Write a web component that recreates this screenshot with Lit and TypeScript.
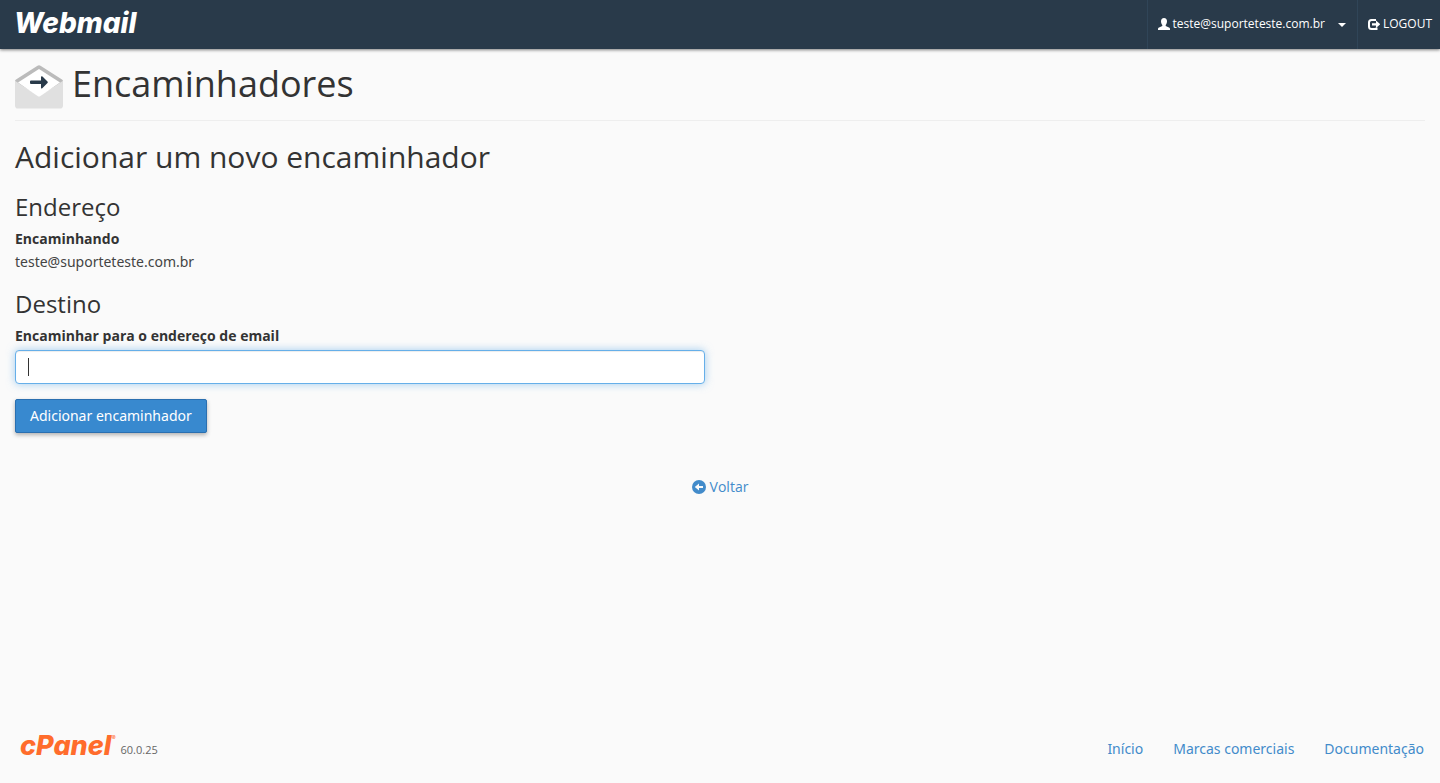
import { LitElement, html, css, svg } from "lit";
import { customElement, property, state } from "lit/decorators.js";

const userIcon = svg`<svg class="glyph" viewBox="0 0 12 12" width="12" height="12" aria-hidden="true"><path fill="currentColor" d="M6 0C8 0 9 1.300 9 3.200C9 4.700 8.500 6 7.700 6.900V8L11 9.400Q12 9.800 12 11V12H0V11Q0 9.800 1 9.400L4.300 8V6.900C3.500 6 3 4.700 3 3.200C3 1.300 4 0 6 0Z"/></svg>`;
const logoutIcon = svg`<svg class="glyph" viewBox="0 0 12 12" width="12" height="12" aria-hidden="true"><path fill="none" stroke="currentColor" stroke-width="2" d="M8 2H3.500Q1 2 1 4.500V8.500Q1 11 3.500 11H8.500V9.500"/><path fill="currentColor" d="M4 5.300H8V2.500L12.300 6.300L8 10V7.500H4Z"/></svg>`;
const backIcon = svg`<svg class="glyph back" viewBox="0 0 14 14" width="14" height="14" aria-hidden="true"><circle cx="7" cy="7" r="7" fill="currentColor"/><path fill="#fafafa" d="M2.800 7L7 3.500V6H11V8H7V10.500Z"/></svg>`;
const envelopeIcon = svg`<svg viewBox="0 0 48 48" width="48" height="48" aria-hidden="true"><path fill="#bbb" d="M0 17.500V16Q0 15 1 14.400L22.500 .7Q24 -.2 25.500 .7L47 14.400Q48 15 48 16V17.500L24 30Z"/><path fill="#fff" d="M3 17.500L24 4L45 17.500L25.500 31Q24 32 22.500 31Z"/><path fill="#e0e0e0" d="M0 15.800L22.500 31Q24 32 25.500 31L48 15.800V40.500Q48 43.600 45 43.600H3Q0 43.600 0 40.500Z"/><path fill="#293a4a" d="M16 15.500H26V12.500Q26 10.500 27.500 11.500L32.500 16.500Q33.200 17.300 32.500 18L27.500 23Q26 24.300 26 22.500V19H16Q15 19 15 18V16.500Q15 15.500 16 15.500Z"/></svg>`;

@customElement("webmail-header")
class WebmailHeader extends LitElement {
  @property() account = "";

  static styles = css`
    :host { display: block; }
    .bar {
      display: flex;
      justify-content: space-between;
      height: 49px;
      background: #293a4a;
      box-shadow: 0 1px 3px rgba(0, 0, 0, 0.5);
    }
    .brand {
      padding-left: 14px;
      font: italic 800 28px/46px Inter, sans-serif;
      color: #fff;
      text-decoration: none;
    }
    .tools { display: flex; }
    .item {
      display: flex;
      align-items: center;
      gap: 3px;
      box-sizing: border-box;
      height: 49px;
      margin: 0;
      padding: 0 8px 2px 10px;
      border: 0;
      border-left: 1px solid #304558;
      background: none;
      color: #fff;
      font: 12px/20px "Open Sans", sans-serif;
      text-decoration: none;
      cursor: pointer;
    }
    .account { padding-right: 11px; }
    .glyph { flex: none; }
    .caret {
      margin: 3px 0 0 10px;
      border: 4px solid transparent;
      border-top-color: #fff;
      border-bottom: 0;
    }
  `;

  render() {
    return html`
      <header class="bar">
        <a class="brand" href="#">Webmail</a>
        <nav class="tools">
          <button class="item account" type="button" aria-haspopup="true">
            ${userIcon}<span>${this.account}</span><span class="caret"></span>
          </button>
          <a class="item" href="#logout">${logoutIcon}<span>LOGOUT</span></a>
        </nav>
      </header>
    `;
  }
}

@customElement("webmail-footer")
class WebmailFooter extends LitElement {
  static styles = css`
    :host { display: block; }
    .footer {
      display: flex;
      justify-content: space-between;
      align-items: center;
      padding: 0 16px 15px 20px;
    }
    .product { display: flex; align-items: flex-end; gap: 5px; padding-bottom: 6px; }
    .logo {
      color: #ff6c2c;
      font: italic 800 27px/32px Inter, sans-serif;
      text-decoration: none;
    }
    .mark { font-size: 6px; font-weight: 400; vertical-align: 15px; line-height: 1; }
    .version { color: #666; font-size: 11px; line-height: 24px; }
    .links { display: flex; gap: 30px; font-family: "Noto Sans", sans-serif; line-height: 20px; }
    .link { color: #428bca; text-decoration: none; }
  `;

  private links = ["Início", "Marcas comerciais", "Documentação"];

  render() {
    return html`
      <footer class="footer">
        <div class="product">
          <a class="logo" href="#cpanel">cPanel<span class="mark">®</span></a>
          <span class="version">60.0.25</span>
        </div>
        <nav class="links">
          ${this.links.map((text) => html`<a class="link" href="#">${text}</a>`)}
        </nav>
      </footer>
    `;
  }
}

@customElement("app-root")
class AppRoot extends LitElement {
  @state() private account = "teste@suporteteste.com.br";

  static styles = css`
    :host {
      display: flex;
      flex-direction: column;
      min-height: 100vh;
      background: #fafafa;
      color: #333;
      font: 14px/20px "Open Sans", sans-serif;
    }
    .content { flex: 1; padding: 16px 15px 0; }
    .title {
      display: flex;
      gap: 9px;
      height: 55px;
      margin: 0;
      border-bottom: 1px solid #eee;
      font-size: 36px;
      font-weight: 400;
      line-height: 38px;
    }
    .section { margin: 19px 0 20px; font-size: 30px; font-weight: 400; line-height: 33px; }
    .group { margin: 0 0 8px; font-size: 24px; font-weight: 400; line-height: 28px; }
    .label { display: block; margin-bottom: 3px; font-weight: 700; line-height: 20px; }
    .value { margin: 0 0 18px; color: #444; font-family: "Noto Sans", sans-serif; }
    .field {
      display: block;
      box-sizing: border-box;
      width: 50%;
      max-width: 690px;
      height: 34px;
      margin: 4px 0 15px;
      padding: 6px 12px;
      border: 1px solid #66afe9;
      border-radius: 4px;
      outline: 0;
      background: linear-gradient(#333, #333) 12px 7px / 1px 18px no-repeat #fff;
      caret-color: transparent;
      box-shadow: inset 0 1px 1px rgba(0, 0, 0, 0.075), 0 0 8px rgba(102, 175, 233, 0.6);
      color: #555;
      font: inherit;
    }
    .submit {
      height: 34px;
      padding: 0 14px;
      border: 1px solid #2a6fb0;
      border-radius: 2px;
      background: #3889cf;
      box-shadow: 0 2px 4px rgba(0, 0, 0, 0.3);
      color: #fff;
      font: inherit;
      font-family: "Noto Sans", sans-serif;
    }
    .return { display: flex; justify-content: center; margin-top: 44px; }
    .backlink {
      display: flex;
      align-items: center;
      gap: 4px;
      color: #428bca;
      text-decoration: none;
    }
  `;

  render() {
    return html`
      <webmail-header .account=${this.account}></webmail-header>
      <main class="content">
        <h1 class="title">${envelopeIcon}<span>Encaminhadores</span></h1>
        <h2 class="section">Adicionar um novo encaminhador</h2>
        <form @submit=${(e: Event) => e.preventDefault()}>
          <h3 class="group">Endereço</h3>
          <span class="label">Encaminhando</span>
          <p class="value">${this.account}</p>
          <h3 class="group">Destino</h3>
          <label class="label" for="target">Encaminhar para o endereço de email</label>
          <input class="field" id="target" type="text" />
          <button class="submit" type="submit">Adicionar encaminhador</button>
        </form>
        <div class="return"><a class="backlink" href="#">${backIcon}<span>Voltar</span></a></div>
      </main>
      <webmail-footer></webmail-footer>
    `;
  }
}
